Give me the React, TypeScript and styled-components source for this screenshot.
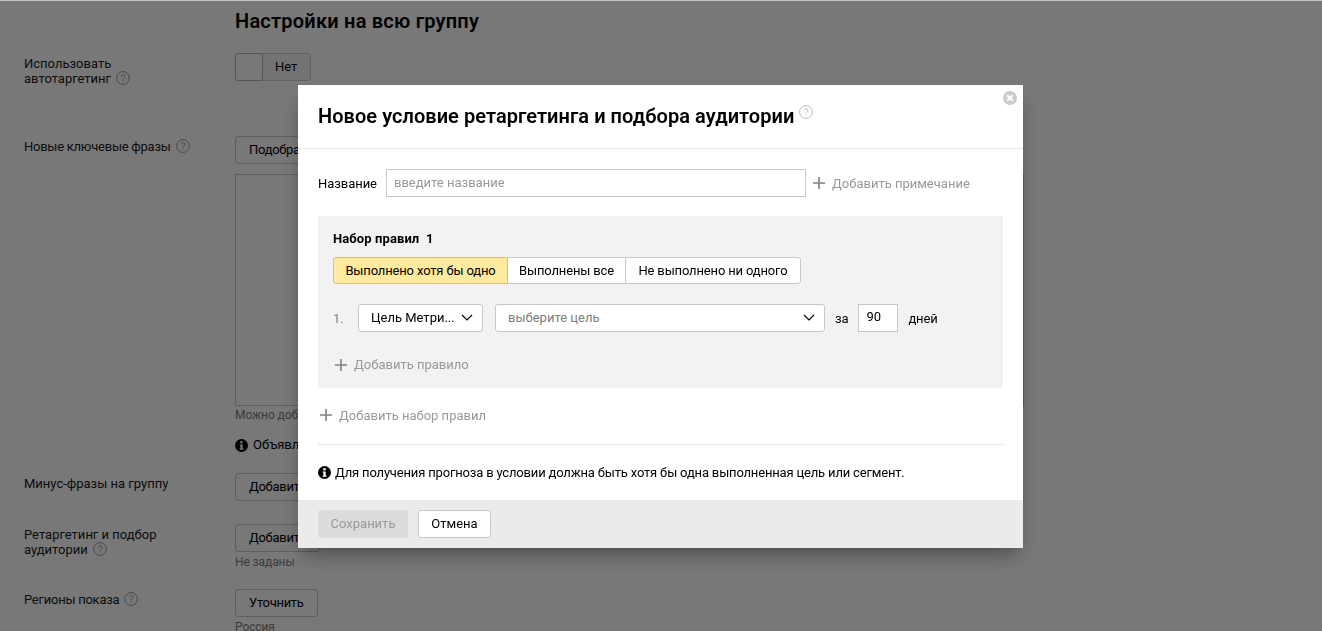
import React from 'react';
import styled, { createGlobalStyle } from 'styled-components';

const GlobalStyle = createGlobalStyle`
  html, body {
    margin: 0;
    height: 100%;
    overflow: hidden;
    background: #fff;
    font-family: Roboto, "Open Sans", sans-serif;
    font-size: 13px;
    color: #000;
  }
`

const HelpIcon: React.FC<{ size?: number; color?: string }> = ({ size = 14, color = '#999' }) => (
  <svg width={size} height={size} viewBox="0 0 14 14" fill="none">
    <circle cx="7" cy="7" r="6.4" stroke={color} strokeWidth="1" />
    <path d="M5.2 5.5c0-1.1.8-1.8 1.9-1.8s1.8.7 1.8 1.6c0 1.4-1.9 1.5-1.9 3.1" stroke={color} strokeWidth="1" />
    <rect x="6.5" y="9.4" width="1.1" height="1.1" fill={color} />
  </svg>
)

const InfoIcon: React.FC = () => (
  <svg width="13" height="13" viewBox="0 0 13 13">
    <circle cx="6.5" cy="6.5" r="6.5" fill="#000" />
    <rect x="5.3" y="2.2" width="2.4" height="2.2" fill="#fff" />
    <path d="M4.6 5.4h3.1v4.2h.8v1.2H4.6V9.6h.8V6.6h-.8z" fill="#fff" />
  </svg>
)

const PlusIcon: React.FC = () => (
  <svg width="12" height="12" viewBox="0 0 12 12">
    <path d="M5.2 0h1.6v5.2H12v1.6H6.8V12H5.2V6.8H0V5.2h5.2z" fill="#808080" />
  </svg>
)

const ChevronIcon: React.FC = () => (
  <svg width="12" height="7" viewBox="0 0 12 7" fill="none">
    <path d="M1 1l5 5 5-5" stroke="#000" strokeWidth="1.2" />
  </svg>
)

const CloseIcon: React.FC = () => (
  <svg width="14" height="14" viewBox="0 0 14 14">
    <circle cx="7" cy="7" r="7" fill="#ccc" />
    <path d="M4.2 4.2l5.6 5.6M9.8 4.2l-5.6 5.6" stroke="#fff" strokeWidth="2" />
  </svg>
)

const App: React.FC = () => {
  return (
    <>
      <GlobalStyle />
      <Page>
        <PageTitle>Настройки на всю группу</PageTitle>

        <SwitchRow>
          <RowLabel>Использовать<br />автотаргетинг <HelpIcon /></RowLabel>
          <Switch>
            <SwitchKnob />
            <SwitchText>Нет</SwitchText>
          </Switch>
        </SwitchRow>

        <PhrasesRow>
          <RowLabel $tight>Новые ключевые фразы <HelpIcon /></RowLabel>
          <div>
            <PageButton>Подобрать</PageButton>
            <PhrasesArea />
            <PhrasesHint>Можно добавить</PhrasesHint>
            <PageNote><InfoIcon /> Объявления</PageNote>
          </div>
        </PhrasesRow>

        <MinusRow>
          <RowLabel>Минус-фразы на группу</RowLabel>
          <PageButton>Добавить</PageButton>
        </MinusRow>

        <RetargetRow>
          <RowLabel>Ретаргетинг и подбор<br />аудитории <HelpIcon /></RowLabel>
          <div>
            <PageButton>Добавить</PageButton>
            <Hint>Не заданы</Hint>
          </div>
        </RetargetRow>

        <RegionRow>
          <RowLabel $tight>Регионы показа <HelpIcon /></RowLabel>
          <div>
            <PageButton>Уточнить</PageButton>
            <Hint>Россия</Hint>
          </div>
        </RegionRow>
      </Page>

      <Overlay>
        <Modal>
          <CloseButton><CloseIcon /></CloseButton>

          <ModalHeader>
            <ModalTitle>Новое условие ретаргетинга и подбора аудитории</ModalTitle>
            <TitleHelp><HelpIcon color="#bbb" /></TitleHelp>
          </ModalHeader>

          <ModalBody>
            <NameRow>
              <NameLabel>Название</NameLabel>
              <NameInput>введите название</NameInput>
              <AddLink>
                <PlusIcon />
                Добавить примечание
              </AddLink>
            </NameRow>

            <RuleSet>
              <RuleSetTitle>Набор правил&nbsp; 1</RuleSetTitle>
              <Segments>
                <Segment $active $width={175}>Выполнено хотя бы одно</Segment>
                <Segment $width={119}>Выполнены все</Segment>
                <Segment $width={176}>Не выполнено ни одного</Segment>
              </Segments>

              <RuleRow>
                <RuleNumber>1.</RuleNumber>
                <TypeSelect>
                  Цель Метри...
                  <ChevronIcon />
                </TypeSelect>
                <GoalSelect>
                  выберите цель
                  <ChevronIcon />
                </GoalSelect>
                <RuleWord>за</RuleWord>
                <DaysInput>90</DaysInput>
                <RuleWord>дней</RuleWord>
              </RuleRow>

              <AddRule>
                <PlusIcon />
                Добавить правило
              </AddRule>
            </RuleSet>

            <AddRuleSet>
              <PlusIcon />
              Добавить набор правил
            </AddRuleSet>

            <Notice>
              <InfoIcon />
              Для получения прогноза в условии должна быть хотя бы одна выполненная цель или сегмент.
            </Notice>
          </ModalBody>

          <ModalFooter>
            <SaveButton>Сохранить</SaveButton>
            <CancelButton>Отмена</CancelButton>
          </ModalFooter>
        </Modal>
      </Overlay>
    </>
  )
}

const Page = styled.div`
  padding: 10px 0 0 24px;
  box-sizing: border-box;
  height: 631px;
  overflow: hidden;
  line-height: 14px;
`

const PageTitle = styled.h2`
  margin: 0 0 0 211px;
  font-size: 20px;
  font-weight: 600;
  line-height: 22px;
  letter-spacing: 0.22px;
`

const Row = styled.div`
  display: grid;
  grid-template-columns: 211px 1fr;
  justify-items: start;
`

const SwitchRow = styled(Row)`
  margin-top: 21px;
  height: 83px;
`

const PhrasesRow = styled(Row)`
  height: 337px;
`

const MinusRow = styled(Row)`
  height: 51px;
`

const RetargetRow = styled(Row)`
  height: 65px;
`

const RegionRow = styled(Row)``

const RowLabel = styled.div<{ $tight?: boolean }>`
  padding-top: ${props => (props.$tight ? '3px' : '4px')};
  color: #1a1a1a;
  letter-spacing: ${props => (props.$tight ? '-0.25px' : '0')};
  svg {
    vertical-align: -2px;
    margin-left: 2px;
  }
`

const Switch = styled.div`
  display: flex;
  align-items: center;
  width: 76px;
  height: 28px;
  box-sizing: border-box;
  border: 1px solid #cfcfcf;
  border-radius: 3px;
  background: #f5f5f5;
`

const SwitchKnob = styled.div`
  width: 28px;
  height: 28px;
  margin: -1px 0 -1px -1px;
  box-sizing: border-box;
  border: 1px solid #b5b5b5;
  border-radius: 3px;
  background: #fff;
`

const SwitchText = styled.span`
  margin-left: 12px;
`

const PageButton = styled.div`
  display: inline-flex;
  align-items: center;
  height: 28px;
  box-sizing: border-box;
  padding: 0 13px;
  border: 1px solid #c8c8c8;
  border-radius: 3px;
  background: #fff;
  letter-spacing: -0.3px;
`

const PhrasesArea = styled.div`
  width: 789px;
  height: 232px;
  margin-top: 10px;
  box-sizing: border-box;
  border: 1px solid #c8c8c8;
`

const Hint = styled.div`
  margin-top: 3px;
  font-size: 12px;
  color: #808080;
  letter-spacing: -0.1px;
`

const PhrasesHint = styled(Hint)`
  margin-top: 2px;
`

const PageNote = styled.div`
  display: flex;
  align-items: center;
  gap: 5px;
  margin-top: 16px;
`

const Overlay = styled.div`
  position: fixed;
  inset: 0;
  display: flex;
  justify-content: center;
  align-items: flex-start;
  padding: 84px 1px 0 0;
  box-sizing: border-box;
  border-top: 1px solid #c4c4c4;
  background: rgba(0, 0, 0, 0.53);
`

const Modal = styled.div`
  position: relative;
  width: 725px;
  background: #fff;
  box-shadow: 0 10px 20px -5px rgba(0, 0, 0, 0.4);
`

const CloseButton = styled.div`
  position: absolute;
  top: 6px;
  right: 6px;
  height: 14px;
  svg {
    display: block;
  }
`

const ModalHeader = styled.div`
  display: flex;
  align-items: flex-start;
  height: 64px;
  box-sizing: border-box;
  padding: 18px 20px 0;
  border-bottom: 1px solid #e5e5e5;
`

const ModalTitle = styled.h2`
  margin: 0;
  font-size: 20px;
  font-weight: 600;
  line-height: 26px;
  letter-spacing: 0.05px;
`

const TitleHelp = styled.span`
  margin: 2px 0 0 5px;
  height: 14px;
`

const ModalBody = styled.div`
  padding: 20px 20px 0;
`

const NameRow = styled.div`
  display: flex;
  align-items: center;
  height: 28px;
`

const NameLabel = styled.span`
  width: 68px;
  letter-spacing: -0.05px;
`

const NameInput = styled.div`
  display: flex;
  align-items: center;
  width: 420px;
  height: 28px;
  box-sizing: border-box;
  padding: 0 7px 1px;
  border: 1px solid #c8c8c8;
  color: #999;
`

const AddLink = styled.div`
  display: flex;
  align-items: center;
  gap: 7px;
  margin-left: 7px;
  color: #999;
`

const RuleSet = styled.div`
  margin-top: 19px;
  height: 172px;
  box-sizing: border-box;
  padding: 15px 15px 0;
  background: #f2f2f2;
`

const RuleSetTitle = styled.div`
  font-weight: 700;
  line-height: 16px;
  letter-spacing: 0.1px;
`

const Segments = styled.div`
  display: flex;
  margin-top: 10px;
  height: 27px;
`

const Segment = styled.div<{ $active?: boolean; $width: number }>`
  display: flex;
  align-items: center;
  justify-content: center;
  width: ${props => props.$width}px;
  box-sizing: border-box;
  margin-left: -1px;
  border: 1px solid ${props => (props.$active ? '#d9c17a' : '#c8c8c8')};
  background: ${props => (props.$active ? '#ffeba0' : '#fff')};
  position: ${props => (props.$active ? 'relative' : 'static')};
  letter-spacing: -0.15px;
  &:first-child {
    margin-left: 0;
    border-radius: 3px 0 0 3px;
  }
  &:last-child {
    border-radius: 0 3px 3px 0;
  }
`

const RuleRow = styled.div`
  display: flex;
  align-items: center;
  height: 28px;
  margin-top: 20px;
`

const RuleNumber = styled.span`
  width: 25px;
  color: #808080;
`

const SelectBox = styled.div`
  display: flex;
  align-items: center;
  justify-content: space-between;
  height: 28px;
  box-sizing: border-box;
  padding: 0 9px 1px 12px;
  border: 1px solid #c8c8c8;
  border-radius: 3px;
  background: #fff;
`

const TypeSelect = styled(SelectBox)`
  width: 125px;
`

const GoalSelect = styled(SelectBox)`
  width: 330px;
  margin-left: 12px;
  color: #808080;
`

const RuleWord = styled.span`
  margin: 0 10px;
  letter-spacing: -0.15px;
`

const DaysInput = styled.div`
  width: 40px;
  height: 28px;
  box-sizing: border-box;
  padding: 0 7px;
  line-height: 24px;
  border: 1px solid #c8c8c8;
  background: #fff;
`

const AddRule = styled(AddLink)`
  margin: 25px 0 0 2px;
`

const AddRuleSet = styled(AddLink)`
  margin: 18px 0 0 2px;
  height: 18px;
`

const Notice = styled.div`
  display: flex;
  align-items: center;
  gap: 4px;
  margin-top: 20px;
  height: 56px;
  box-sizing: border-box;
  border-top: 1px solid #e5e5e5;
  letter-spacing: -0.17px;
`

const ModalFooter = styled.div`
  display: flex;
  gap: 10px;
  height: 48px;
  box-sizing: border-box;
  padding: 10px 20px;
  background: #ebebeb;
`

const SaveButton = styled.div`
  display: flex;
  align-items: center;
  justify-content: center;
  width: 90px;
  height: 28px;
  box-sizing: border-box;
  padding-bottom: 2px;
  border-radius: 3px;
  background: #dcdcdc;
  color: #999;
`

const CancelButton = styled.div`
  display: flex;
  align-items: center;
  justify-content: center;
  width: 73px;
  height: 28px;
  box-sizing: border-box;
  padding-bottom: 2px;
  border: 1px solid #c8c8c8;
  border-radius: 3px;
  background: #fff;
`

export default App
